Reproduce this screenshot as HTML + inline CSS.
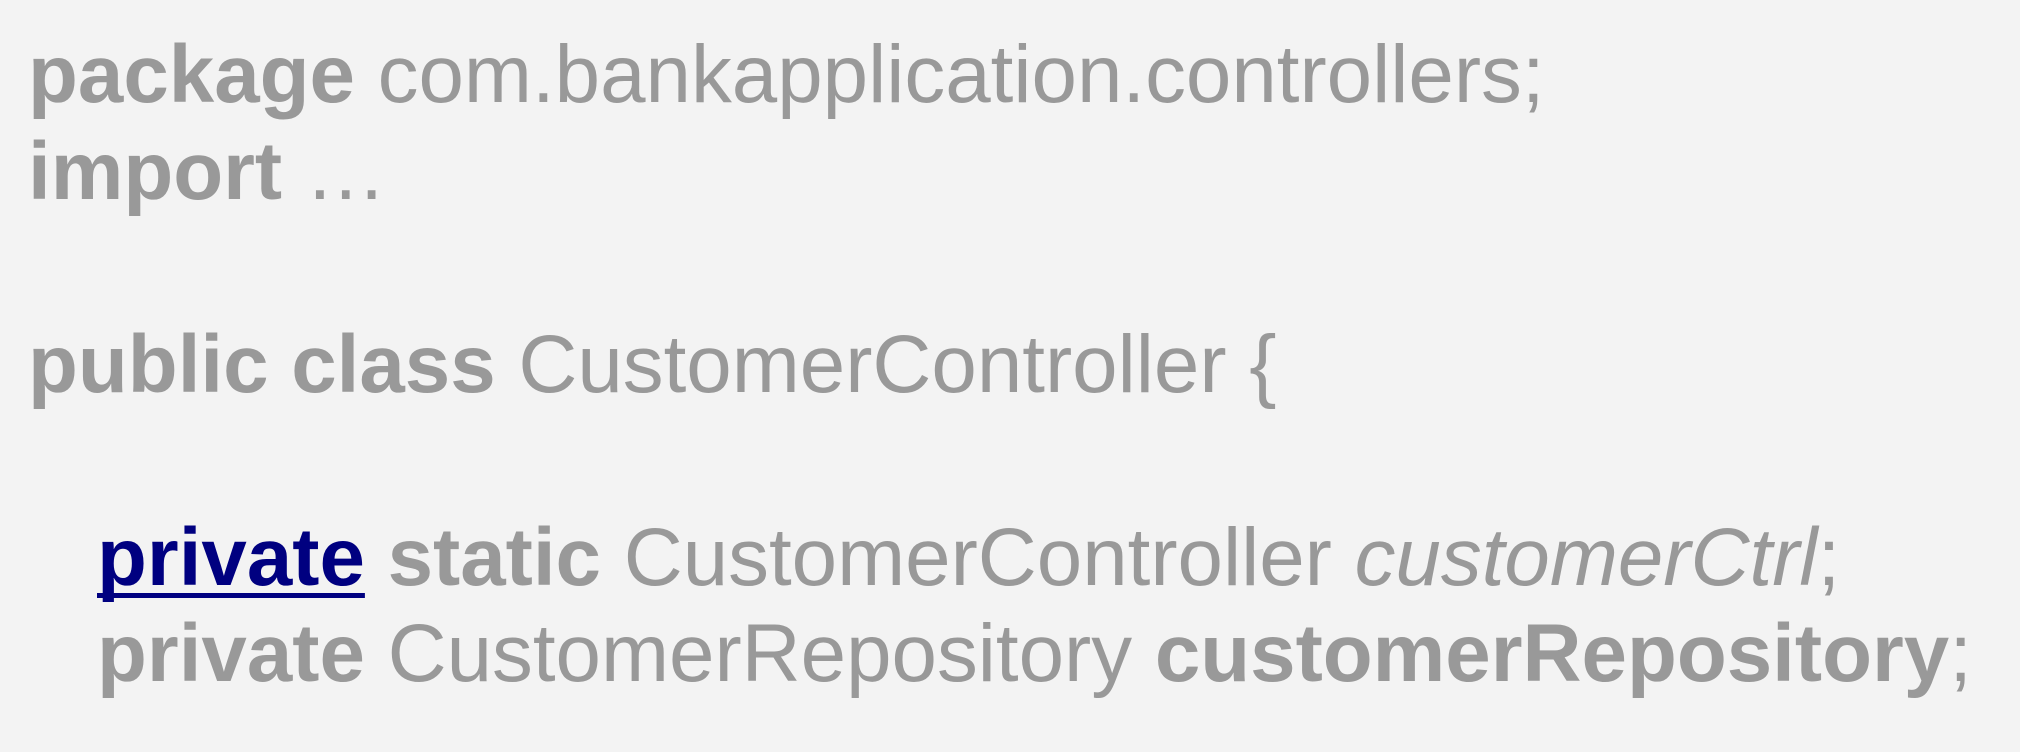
<!DOCTYPE html>
<html><head><meta charset="utf-8"><style>
html,body{margin:0;padding:0;background:#f3f3f3;width:2020px;height:752px;overflow:hidden}
.l{position:absolute;font-family:"Liberation Sans",Arial,sans-serif;font-size:81.7px;line-height:82px;color:#999;white-space:pre}
b{font-weight:bold}
.u{color:#000080;text-decoration:underline;text-decoration-thickness:5px;text-underline-offset:8px;text-decoration-skip-ink:none}
</style></head><body>
<div class="l" style="left:28px;top:34px"><b>package</b> com.bankapplication.controllers;</div>
<div class="l" style="left:28px;top:131px"><b>import</b> …</div>
<div class="l" style="left:28px;top:324px"><b>public class</b> CustomerController {</div>
<div class="l" style="left:97px;top:517px"><b class="u">private</b> <b>static</b> CustomerController <i>customerCtrl</i>;</div>
<div class="l" style="left:97px;top:613px"><b>private</b> CustomerRepository <b>customerRepository</b>;</div>
</body></html>
